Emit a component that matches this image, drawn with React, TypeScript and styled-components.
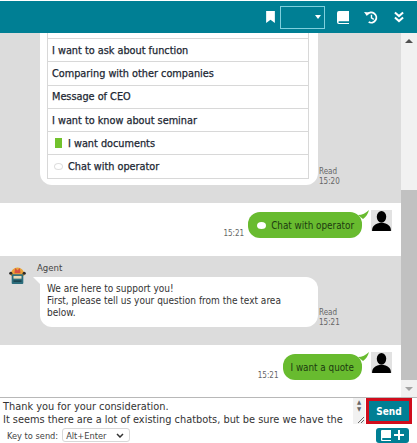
import React from 'react';
import styled, { createGlobalStyle } from 'styled-components';

const GlobalStyle = createGlobalStyle`
    html, body {
        margin: 0;
        padding: 0;
        background: #fff;
    }
    body {
        font-family: "DejaVu Sans", Verdana, sans-serif;
        font-stretch: condensed;
    }
`;

const Frame = styled.div`
    width: 417px;
    height: 443px;
    display: flex;
    flex-direction: column;
    overflow: hidden;
    color: #333;
`;

const Header = styled.div`
    height: 32px;
    margin-top: 1px;
    flex: none;
    background: #007f94;
    display: flex;
    align-items: center;
    justify-content: flex-end;
    padding-right: 13px;
    color: #fff;
`;

const HeaderIcon = styled.svg<{ $gap?: number }>`
    display: block;
    margin-left: ${p => p.$gap ?? 0}px;
`;

const HeaderSelect = styled.div`
    width: 45px;
    height: 23px;
    box-sizing: border-box;
    margin-left: 5px;
    border: 1px solid #7fd0dd;
    display: flex;
    align-items: center;
    justify-content: flex-end;
    padding-right: 3px;
`;

const Caret = styled.span`
    width: 0;
    height: 0;
    border-left: 3px solid transparent;
    border-right: 3px solid transparent;
    border-top: 4px solid #fff;
`;

const Middle = styled.div`
    flex: 1;
    min-height: 0;
    display: flex;
`;

const Log = styled.div`
    flex: 1;
    min-width: 0;
    display: flex;
    flex-direction: column;
`;

const Band = styled.div<{ $h: number; $gray?: boolean }>`
    height: ${p => p.$h}px;
    flex: none;
    box-sizing: border-box;
    background: ${p => (p.$gray ? '#dcdcdc' : '#fff')};
    display: flex;
`;

const MenuBand = styled(Band)`
    padding-left: 40px;
`;

const MenuBubble = styled.div`
    width: 278px;
    height: 152px;
    box-sizing: border-box;
    background: #fff;
    border-radius: 0 0 12px 12px;
    padding: 0 9px 0 7px;
`;

const MenuTop = styled.div`
    height: 5px;
    border: 1px solid #d8d8d8;
    border-top: 0;
    border-bottom: 0;
`;

const MenuList = styled.div`
    border: 1px solid #d8d8d8;
`;

const MenuRow = styled.div`
    height: 22.3px;
    display: flex;
    align-items: center;
    gap: 6px;
    padding: 0 0 1px 4px;
    box-sizing: content-box;
    margin-bottom: -1px;
    font-size: 10.8px;
    -webkit-text-stroke: 0.25px #1c2733;
    color: #1c2733;
    white-space: nowrap;
    & + & {
        border-top: 1px solid #d8d8d8;
    }
`;

const DocMark = styled.span`
    width: 7px;
    height: 10px;
    background: #72c22d;
    margin-left: 3px;
`;

const BubbleMark = styled.span`
    width: 9px;
    height: 7px;
    box-sizing: border-box;
    border-radius: 50%;
    background: #fff;
    border: 1px solid #dedede;
    margin: 0 -1px 0 2px;
`;

const ReadInfo = styled.div<{ $top: number }>`
    margin: ${p => p.$top}px 0 0 1px;
    font-size: 8px;
    line-height: 10px;
    color: #666;
`;

const UserRow = styled(Band)`
    justify-content: flex-end;
    align-items: flex-start;
    padding: 7px 9px 0 0;
`;

const TimeLabel = styled.div`
    margin: 19px 4px 0 0;
    font-size: 8px;
    line-height: 10px;
    color: #666;
`;

const UserBubble = styled.div`
    position: relative;
    height: 26px;
    box-sizing: border-box;
    background: #68bb2f;
    border-radius: 12px;
    display: flex;
    align-items: center;
    gap: 5px;
    padding: 0 8px;
    margin-top: 2px;
    margin-right: 9px;
    font-size: 9.8px;
    color: #1c3a10;
    white-space: nowrap;
`;

const Tail = styled.svg`
    position: absolute;
    top: -2px;
    right: -8px;
`;

const WhiteDot = styled.span`
    width: 9px;
    height: 7px;
    border-radius: 50%;
    background: #fff;
    margin-left: 1px;
`;

const Avatar = styled.svg`
    display: block;
    flex: none;
`;

const AgentBand = styled(Band)`
    padding: 7px 0 0 8px;
`;

const AgentMark = styled.svg`
    display: block;
    flex: none;
    margin-top: 4px;
`;

const AgentBody = styled.div`
    margin-left: 10px;
`;

const AgentName = styled.div`
    font-size: 9.5px;
    line-height: 10px;
    color: #444;
    margin-bottom: 4px;
`;

const AgentBubble = styled.div`
    position: relative;
    height: 50px;
    box-sizing: border-box;
    width: 278px;
    margin-left: 3px;
    background: #fff;
    border-radius: 0 12px 12px 12px;
    padding: 6px 7px;
    font-size: 10px;
    line-height: 12px;
    color: #333;
    &::before {
        content: '';
        position: absolute;
        top: 0;
        left: -7px;
        border-top: 7px solid #fff;
        border-left: 7px solid transparent;
    }
`;

const Scrollbar = styled.div`
    width: 16px;
    flex: none;
    background: #f1f1f1;
    display: flex;
    flex-direction: column;
    align-items: center;
`;

const ScrollArrow = styled.div<{ $down?: boolean }>`
    height: 16px;
    flex: none;
    display: flex;
    align-items: center;
    justify-content: center;
    &::before {
        content: '';
        border-left: 4px solid transparent;
        border-right: 4px solid transparent;
        ${p =>
            p.$down
                ? 'border-top: 4px solid #a3a3a3;'
                : 'border-bottom: 4px solid #505050;'}
    }
`;

const ScrollTrack = styled.div`
    flex: 1;
    width: 100%;
    padding-top: 141px;
    box-sizing: border-box;
`;

const ScrollThumb = styled.div`
    height: 190px;
    background: #c1c1c1;
`;

const Composer = styled.div`
    height: 30px;
    flex: none;
    border-top: 1px solid #b8b8b8;
    display: flex;
    box-sizing: border-box;
`;

const Input = styled.div`
    flex: 1;
    min-width: 0;
    padding: 2px 0 0 3px;
    font-size: 10.9px;
    line-height: 13px;
    color: #333;
    white-space: pre;
    overflow: hidden;
`;

const InputScroll = styled.div`
    position: relative;
    width: 12px;
    height: 26px;
    flex: none;
    background: #f1f1f1;
    color: #666;
    font-size: 6px;
    line-height: 7px;
    text-align: center;
    svg {
        position: absolute;
        right: 1px;
        bottom: 1px;
    }
`;

const SendButton = styled.div`
    width: 46px;
    height: 26px;
    flex: none;
    box-sizing: border-box;
    margin: 0 5px 0 1px;
    background: #007f94;
    border: 3px solid #d00c1c;
    color: #fff;
    font-size: 10px;
    font-weight: 700;
    display: flex;
    align-items: center;
    justify-content: center;
`;

const Footer = styled.div`
    height: 16px;
    flex: none;
    display: flex;
    align-items: center;
    padding: 0 8px 0 7px;
    font-size: 9.2px;
    color: #444;
`;

const KeySelect = styled.div`
    width: 68px;
    height: 14px;
    box-sizing: border-box;
    margin-left: 4px;
    border: 1px solid #d8d8d8;
    border-radius: 3px;
    display: flex;
    align-items: center;
    justify-content: space-between;
    padding: 0 5px 0 3px;
`;

const AddButton = styled.div`
    margin-left: auto;
    width: 33px;
    height: 15px;
    background: #007f94;
    border-radius: 3px;
    display: flex;
    align-items: center;
    justify-content: center;
    gap: 3px;
`;

const menuItems = [
    'I want to ask about function',
    'Comparing with other companies',
    'Message of CEO',
    'I want to know about seminar',
];

const UserIcon = () => (
    <Avatar width="21" height="21" viewBox="0 0 20 20">
        <rect width="20" height="20" fill="#e2e2e2" />
        <ellipse cx="10" cy="6.5" rx="4.5" ry="5.5" fill="#000" />
        <path d="M1 20c0-5 3-7 9-8 6 1 9 3 9 8z" fill="#000" />
    </Avatar>
);

const BubbleTail = () => (
    <Tail width="12" height="10" viewBox="0 0 12 10">
        <path d="M0 5c4 0 8-2 11-5-1 4-3 7-6 9z" fill="#68bb2f" />
    </Tail>
);

const App = () => {
    return (
        <Frame>
            <GlobalStyle />
            <Header>
                <HeaderIcon width="9" height="12" viewBox="0 0 8 11">
                    <path d="M0 0h8v11L4 8l-4 3z" fill="#fff" />
                </HeaderIcon>
                <HeaderSelect>
                    <Caret />
                </HeaderSelect>
                <HeaderIcon width="12" height="13" viewBox="0 0 13 14" $gap={12}>
                    <path d="M2 0h11v11H2.500a1 1 0 0 0 0 2H13v1H2a2 2 0 0 1-2-2V2a2 2 0 0 1 2-2z" fill="#fff" />
                </HeaderIcon>
                <HeaderIcon width="14" height="13" viewBox="0 0 15 14" $gap={15}>
                    <path d="M3.500 3.500A5.500 5.500 0 1 1 5 11.800" fill="none" stroke="#fff" strokeWidth="2" />
                    <path d="M0 1l6 .5-3 4z" fill="#fff" />
                    <path d="M8 4v3.500l2.500 1.500" fill="none" stroke="#fff" strokeWidth="1.500" />
                </HeaderIcon>
                <HeaderIcon width="10" height="12" viewBox="0 0 11 12" $gap={16}>
                    <path d="M1 1l4.500 4L10 1M1 6.500l4.500 4 4.500-4" fill="none" stroke="#fff" strokeWidth="2.200" />
                </HeaderIcon>
            </Header>
            <Middle>
                <Log>
                    <MenuBand $h={170} $gray>
                        <MenuBubble>
                            <MenuTop />
                            <MenuList>
                                {menuItems.map(item => (
                                    <MenuRow key={item}>{item}</MenuRow>
                                ))}
                                <MenuRow>
                                    <DocMark />
                                    I want documents
                                </MenuRow>
                                <MenuRow>
                                    <BubbleMark />
                                    Chat with operator
                                </MenuRow>
                            </MenuList>
                        </MenuBubble>
                        <ReadInfo $top={134}>
                            Read
                            <br />
                            15:20
                        </ReadInfo>
                    </MenuBand>
                    <UserRow $h={53}>
                        <TimeLabel>15:21</TimeLabel>
                        <UserBubble>
                            <WhiteDot />
                            Chat with operator
                            <BubbleTail />
                        </UserBubble>
                        <UserIcon />
                    </UserRow>
                    <AgentBand $h={89} $gray>
                        <AgentMark width="19" height="17" viewBox="0 0 19 19">
                            <path d="M2 8a7.500 7.500 0 0 1 15 0v2H2z" fill="#e8a33a" />
                            <path d="M7 1l2.500 3L12 1l1 6H6z" fill="#d9503f" />
                            <circle cx="2" cy="7" r="1.800" fill="#2a2a2a" />
                            <circle cx="17" cy="7" r="1.800" fill="#2a2a2a" />
                            <rect x="3" y="8" width="13" height="11" rx="1" fill="#2c6d7c" />
                            <rect x="5" y="10" width="9" height="3" fill="#e9d9b4" />
                            <rect x="5" y="15" width="9" height="1.500" fill="#173c46" />
                        </AgentMark>
                        <AgentBody>
                            <AgentName>Agent</AgentName>
                            <AgentBubble>
                                We are here to support you!
                                <br />
                                First, please tell us your question from the text area
                                <br />
                                below.
                            </AgentBubble>
                        </AgentBody>
                        <ReadInfo $top={45}>
                            Read
                            <br />
                            15:21
                        </ReadInfo>
                    </AgentBand>
                    <UserRow $h={52}>
                        <TimeLabel>15:21</TimeLabel>
                        <UserBubble>
                            I want a quote
                            <BubbleTail />
                        </UserBubble>
                        <UserIcon />
                    </UserRow>
                </Log>
                <Scrollbar>
                    <ScrollArrow />
                    <ScrollTrack>
                        <ScrollThumb />
                    </ScrollTrack>
                    <ScrollArrow $down />
                </Scrollbar>
            </Middle>
            <Composer>
                <Input>
                    {'Thank you for your consideration.\nIt seems there are a lot of existing chatbots, but be sure we have the'}
                </Input>
                <InputScroll>
                    ▲
                    <br />▼
                    <svg width="7" height="7" viewBox="0 0 7 7">
                        <path d="M1 7l6-6M4 7l3-3" stroke="#666" fill="none" />
                    </svg>
                </InputScroll>
                <SendButton>Send</SendButton>
            </Composer>
            <Footer>
                Key to send:
                <KeySelect>
                    Alt+Enter
                    <svg width="8" height="5" viewBox="0 0 8 5">
                        <path d="M1 1l3 3 3-3" fill="none" stroke="#333" strokeWidth="1.500" />
                    </svg>
                </KeySelect>
                <AddButton>
                    <svg width="10" height="11" viewBox="0 0 10 11">
                        <path d="M1 0h9v8H2a1 1 0 0 0 0 2h8v1H1a1 1 0 0 1-1-1V1a1 1 0 0 1 1-1z" fill="#fff" />
                    </svg>
                    <svg width="10" height="10" viewBox="0 0 10 10">
                        <path d="M4 0h2v4h4v2H6v4H4V6H0V4h4z" fill="#fff" />
                    </svg>
                </AddButton>
            </Footer>
        </Frame>
    );
};

export default App;
